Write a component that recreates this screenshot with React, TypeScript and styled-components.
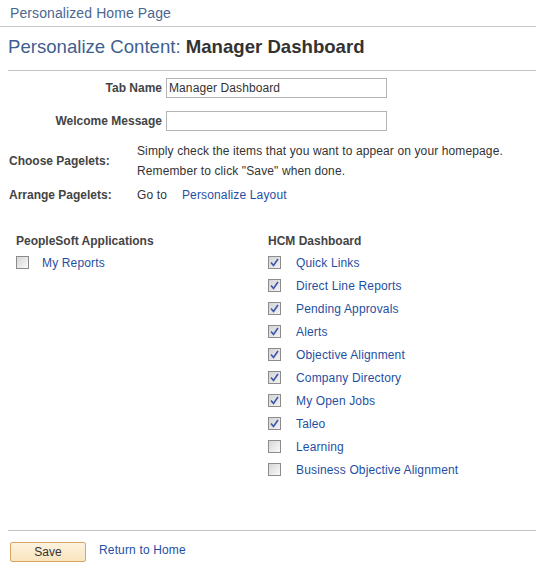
import * as React from 'react';
import styled, { createGlobalStyle } from 'styled-components';

const GlobalStyle = createGlobalStyle`
  body {
    margin: 0;
    background: #fff;
    font-family: 'Liberation Sans', Arial, sans-serif;
    font-size: 12px;
    color: #333;
  }
`;

type Pagelet = {
  name: string;
  checked: boolean;
};

const peopleSoftPagelets: Pagelet[] = [{ name: 'My Reports', checked: false }];

const hcmPagelets: Pagelet[] = [
  { name: 'Quick Links', checked: true },
  { name: 'Direct Line Reports', checked: true },
  { name: 'Pending Approvals', checked: true },
  { name: 'Alerts', checked: true },
  { name: 'Objective Alignment', checked: true },
  { name: 'Company Directory', checked: true },
  { name: 'My Open Jobs', checked: true },
  { name: 'Taleo', checked: true },
  { name: 'Learning', checked: false },
  { name: 'Business Objective Alignment', checked: false },
];

const Page = styled.div`
  width: 536px;
`;

const Breadcrumb = styled.div`
  padding: 4px 10px;
  font-size: 14px;
  line-height: 18px;
  letter-spacing: 0.1px;
  color: #4a6792;
  border-bottom: 1px solid #c9c9c9;
`;

const Title = styled.h1`
  margin: 0 0 0 8px;
  padding: 9px 0 12px;
  font-size: 18.6px;
  line-height: 22px;
  font-weight: normal;
  color: #3f5f90;
  border-bottom: 1px solid #c3c3c3;

  strong {
    color: #333;
    font-weight: bold;
  }
`;

const Form = styled.div`
  padding: 7px 0 0 8px;
  display: flex;
  flex-direction: column;
`;

const FieldRow = styled.div`
  display: flex;
  align-items: center;
  gap: 4px;
  margin-bottom: 13px;
`;

const FieldLabel = styled.label`
  width: 154px;
  text-align: right;
  font-weight: bold;
  color: #444;
`;

const TextInput = styled.input`
  box-sizing: border-box;
  width: 221px;
  height: 20px;
  padding: 0 2px;
  border: 1px solid #b4b4b4;
  font-family: inherit;
  font-size: 12px;
  letter-spacing: 0.1px;
  color: #333;
  outline: none;
`;

const InfoRow = styled.div<{ $gap?: number }>`
  display: grid;
  grid-template-columns: 128px 1fr;
  align-items: center;
  line-height: 20px;
  margin-top: ${(p) => p.$gap ?? 0}px;
`;

const InfoLabel = styled.div`
  padding-left: 1px;
  font-weight: bold;
  color: #444;
`;

const InfoText = styled.div`
  display: flex;
  gap: 15px;
  color: #333;
  letter-spacing: 0.12px;
  padding-left: 1px;
`;

const Link = styled.a`
  color: #1f4fa3;
  text-decoration: none;
  letter-spacing: 0.15px;
  cursor: pointer;
`;

const Columns = styled.div`
  display: grid;
  grid-template-columns: 252px 1fr;
  padding: 28px 0 0 16px;
`;

const Column = styled.div`
  display: flex;
  flex-direction: column;
`;

const ColumnTitle = styled.div`
  font-weight: bold;
  color: #444;
  line-height: 16px;
  margin-bottom: 2px;
`;

const ItemRow = styled.label<{ $gap: number }>`
  display: flex;
  align-items: center;
  gap: ${(p) => p.$gap}px;
  height: 23px;
`;

const Box = styled.span<{ $checked: boolean }>`
  box-sizing: border-box;
  width: 13px;
  height: 13px;
  border: 1px solid #8c8c8c;
  background: ${(p) =>
    p.$checked
      ? 'linear-gradient(135deg, #d4d4d8, #f2f2f4)'
      : 'linear-gradient(135deg, #d6d6d6, #fafafa)'};
  display: flex;
  align-items: center;
  justify-content: center;
`;

const Footer = styled.div`
  margin: 49px 0 0 8px;
  border-top: 1px solid #c3c3c3;
  padding: 11px 0 0 2px;
  display: flex;
  align-items: flex-start;
  gap: 13px;
`;

const SaveButton = styled.button`
  box-sizing: border-box;
  width: 76px;
  height: 20px;
  border: 1px solid #dba568;
  border-radius: 2px;
  background: linear-gradient(#fdf3df, #f9e4bd);
  font-family: inherit;
  font-size: 12px;
  color: #333;
  padding: 0;
`;

const FooterLink = styled(Link)`
  line-height: 17px;
`;

const Checkbox = ({ checked }: { checked: boolean }) => (
  <Box $checked={checked}>
    {checked ? (
      <svg width="9" height="9" viewBox="0 0 9 9">
        <path d="M1 4.5 L3.5 7.5 L8 1" fill="none" stroke="#3b56a8" strokeWidth="1.6" />
      </svg>
    ) : null}
  </Box>
);

const PageletList = ({
  title,
  items,
  gap,
}: {
  title: string;
  items: Pagelet[];
  gap: number;
}) => (
  <Column>
    <ColumnTitle>{title}</ColumnTitle>
    {items.map((item) => (
      <ItemRow key={item.name} $gap={gap}>
        <Checkbox checked={item.checked} />
        <Link>{item.name}</Link>
      </ItemRow>
    ))}
  </Column>
);

export default function App() {
  return (
    <Page>
      <GlobalStyle />
      <Breadcrumb>Personalized Home Page</Breadcrumb>
      <Title>
        Personalize Content: <strong>Manager Dashboard</strong>
      </Title>
      <Form>
        <FieldRow>
          <FieldLabel>Tab Name</FieldLabel>
          <TextInput defaultValue="Manager Dashboard" />
        </FieldRow>
        <FieldRow>
          <FieldLabel>Welcome Message</FieldLabel>
          <TextInput defaultValue="" />
        </FieldRow>
        <InfoRow $gap={-3}>
          <InfoLabel>Choose Pagelets:</InfoLabel>
          <InfoText>
            <div>
              Simply check the items that you want to appear on your homepage.
              <br />
              Remember to click "Save" when done.
            </div>
          </InfoText>
        </InfoRow>
        <InfoRow $gap={4}>
          <InfoLabel>Arrange Pagelets:</InfoLabel>
          <InfoText>
            <span>Go to</span>
            <Link>Personalize Layout</Link>
          </InfoText>
        </InfoRow>
      </Form>
      <Columns>
        <PageletList title="PeopleSoft Applications" items={peopleSoftPagelets} gap={13} />
        <PageletList title="HCM Dashboard" items={hcmPagelets} gap={15} />
      </Columns>
      <Footer>
        <SaveButton>Save</SaveButton>
        <FooterLink>Return to Home</FooterLink>
      </Footer>
    </Page>
  );
}
